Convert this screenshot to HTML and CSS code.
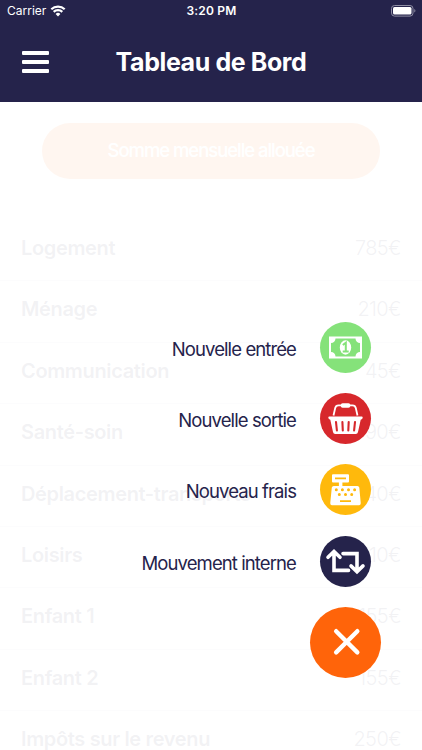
FILE: index.html
```html
<!DOCTYPE html>
<html lang="fr">
<head>
	<meta charset="utf-8">
	<title>Tableau de Bord</title>
	<link rel="stylesheet" href="styles.css">
</head>
<body>

	<header class="header">
		<div class="status-bar">
			<div class="status-left">
				<span class="carrier">Carrier</span>
				<svg class="wifi" viewBox="0 0 16 12" width="16" height="12">
					<path d="M1.3 4.3a9.6 9.6 0 0 1 13.4 0M3.7 6.9a6.1 6.1 0 0 1 8.6 0" fill="none" stroke="#fff" stroke-width="2.2"/>
					<path d="M5.6 9a3.4 3.4 0 0 1 4.8 0L8 11.4z" fill="#fff"/>
				</svg>
			</div>
			<div class="time">3:20 PM</div>
			<div class="status-right">
				<svg width="25" height="12" viewBox="0 0 25 12">
					<rect x=".5" y=".5" width="21.5" height="10.6" rx="3" fill="none" stroke="#8e8da3"/>
					<rect x="2" y="2" width="18.5" height="7.6" rx="1.5" fill="#fff"/>
					<path d="M23.3 4v3.6c1.5-.6 1.5-3 0-3.6z" fill="#8e8da3"/>
				</svg>
			</div>
		</div>
		<div class="nav">
			<div class="burger">
				<span></span>
				<span></span>
				<span></span>
			</div>
			<h1>Tableau de Bord</h1>
		</div>
	</header>

	<main>
		<div class="allocated">Somme mensuelle allouée</div>

		<ul class="expenses">
			<li><b>Logement</b><span>785€</span></li>
			<li><b>Ménage</b><span>210€</span></li>
			<li><b>Communication</b><span>45€</span></li>
			<li><b>Santé-soin</b><span>90€</span></li>
			<li><b>Déplacement-transports</b><span>140€</span></li>
			<li><b>Loisirs</b><span>110€</span></li>
			<li><b>Enfant 1</b><span>155€</span></li>
			<li><b>Enfant 2</b><span>155€</span></li>
			<li><b>Impôts sur le revenu</b><span>250€</span></li>
		</ul>
	</main>

	<div class="overlay"></div>

	<!-- floating action menu -->
	<div class="fab-menu">
		<div class="action">
			<span>Nouvelle entrée</span>
			<div class="circle green">
				<svg viewBox="0 0 51 51">
					<path fill="#fff" fill-rule="evenodd" d="M9 14.5h33v22H9zM15.5 16.500a4.500 4.500 0 0 1-4.500 4.500v9a4.500 4.500 0 0 1 4.500 4.500h20a4.500 4.500 0 0 1 4.500-4.500v-9a4.500 4.500 0 0 1-4.500-4.500z"/>
					<ellipse cx="25.500" cy="25.500" rx="5.700" ry="7.200" fill="#fff"/>
					<path d="M22.800 23l3-2.200v8.800M22.700 29.500h6" fill="none" stroke="#85e27a" stroke-width="2"/>
				</svg>
			</div>
		</div>
		<div class="action">
			<span>Nouvelle sortie</span>
			<div class="circle red">
				<svg viewBox="0 0 51 51">
					<path d="M13.500 22.500l1.700-7.500q.6-2.700 3.300-2.700h14q2.700 0 3.300 2.700l1.700 7.500" fill="none" stroke="#fff" stroke-width="1.800"/>
					<rect x="20.800" y="10.200" width="9.500" height="4.600" rx="1.800" fill="#fff"/>
					<path d="M9.300 23.500h32.400q1 0 1 1t-1 1.700l-1 .5-2.700 12.300q-.4 2-2.200 2H15.200q-1.800 0-2.200-2l-2.700-12.300-1-.5q-1-.7-1-1.700t1-1z" fill="#fff"/>
					<path d="M16 29l.9 8.500M22.400 29l.4 8.500M28.700 29l-.4 8.500M35 29l-.9 8.500" stroke="#d7282c" stroke-width="2.100" stroke-linecap="round"/>
				</svg>
			</div>
		</div>
		<div class="action">
			<span>Nouveau frais</span>
			<div class="circle yellow">
				<svg viewBox="0 0 51 51">
					<path fill="#fff" d="M13 10.200h15q1 0 1 1v6.200q0 1-1 1h-5.600v3.600h15q1.600 0 1.900 1.600l1.400 14.800v1.200q0 1.600-1.600 1.600H11.900q-1.600 0-1.600-1.600v-1.200l1.500-14.800q.3-1.600 1.900-1.600h5.200v-3.600H13q-1 0-1-1v-6.200q0-1 1-1z"/>
					<path d="M15 14.300h11M20 37.200h11" stroke="#ffb90c" stroke-width="1.800"/>
					<path d="M16.300 25.700h.01M22.400 25.700h.01M28.500 25.700h.01M34.600 25.700h.01M19.300 30.500h.01M25.500 30.500h.01M31.700 30.500h.01" stroke="#ffb90c" stroke-width="3" stroke-linecap="round"/>
				</svg>
			</div>
		</div>
		<div class="action">
			<span>Mouvement interne</span>
			<div class="circle navy">
				<svg viewBox="0 0 51 51" fill="none" stroke="#fff" stroke-width="3.600" stroke-linecap="round">
					<path d="M28.500 34.400H14V16M8 21.300l6-5.800 6 5.800"/>
					<path d="M23 17.600h14V35M31 29.900l6 5.800 6-5.800"/>
				</svg>
			</div>
		</div>
		<div class="fab">
			<svg viewBox="0 0 72 72" fill="none" stroke="#fff" stroke-width="4.400" stroke-linecap="round">
				<path d="M26.500 24.500l21.500 21.500M48 24.500l-21.500 21.500"/>
			</svg>
		</div>
	</div>

</body>
</html>
```

FILE: styles.css
```css
body {
	margin: 0;
	height: 750px;
	position: relative;
	overflow: hidden;
	font-family: Inter, "Liberation Sans", sans-serif;
	background-color: #fff;
	color: #25234b;
}

.header {
	height: 102px;
	background-color: #25234b;
	color: #fff;
}

.status-bar {
	display: grid;
	grid-template-columns: 1fr auto 1fr;
	align-items: center;
	height: 21px;
	padding: 0 6px 0 7px;
	font-size: 12px;
}

.status-left {
	display: flex;
	align-items: center;
	gap: 4px;
}

.carrier {
	letter-spacing: 0;
}

.time {
	font-weight: 600;
	letter-spacing: 0.2px;
}

.status-right {
	display: flex;
	justify-content: flex-end;
}

.nav {
	display: grid;
	grid-template-columns: 1fr auto 1fr;
	align-items: center;
	height: 81px;
	padding: 0 22px;
}

.burger {
	display: flex;
	flex-direction: column;
	gap: 5px;
	width: 27px;
}

.burger span {
	height: 4px;
	border-radius: 1px;
	background-color: #fff;
}

h1 {
	margin: 0;
	font-size: 25px;
	font-weight: 700;
	line-height: 30px;
	letter-spacing: -0.4px;
}

.allocated {
	width: 338px;
	height: 56px;
	margin: 20.5px auto 0 42px;
	border-radius: 28px;
	background-color: #ff640a;
	color: #fff;
	font-size: 18.5px;
	font-weight: 500;
	line-height: 55px;
	text-align: center;
	letter-spacing: -1.05px;
}

.expenses {
	list-style: none;
	margin: 41.5px 0 0;
	padding: 0;
}

.expenses li {
	display: flex;
	justify-content: space-between;
	box-sizing: border-box;
	height: 61.4px;
	padding: 0 21px;
	border-bottom: 1px solid #c8c8d0;
	font-size: 20px;
	line-height: 57px;
}

.expenses b {
	font-weight: 600;
	letter-spacing: -0.35px;
}

.expenses span {
	font-weight: 300;
	letter-spacing: -0.6px;
}

.overlay {
	position: absolute;
	top: 102px;
	left: 0;
	right: 0;
	bottom: 0;
	background-color: rgba(255, 255, 255, 0.94);
}

.fab-menu {
	position: absolute;
	right: 41px;
	bottom: 72px;
	display: flex;
	flex-direction: column;
	align-items: flex-end;
	gap: 20.3px;
}

.action {
	display: flex;
	align-items: center;
	gap: 24px;
	margin-right: 10px;
	font-size: 18.5px;
	letter-spacing: -0.9px;
}

.action span {
	padding-top: 3px;
}

.circle {
	width: 51px;
	height: 51px;
	border-radius: 50%;
}

.circle svg,
.fab svg {
	display: block;
}

.green {
	background-color: #85e27a;
}

.red {
	background-color: #d7282c;
}

.yellow {
	background-color: #ffb90c;
}

.navy {
	background-color: #25234b;
}

.fab {
	width: 71px;
	height: 71px;
	border-radius: 50%;
	background-color: #ff640a;
}
```
